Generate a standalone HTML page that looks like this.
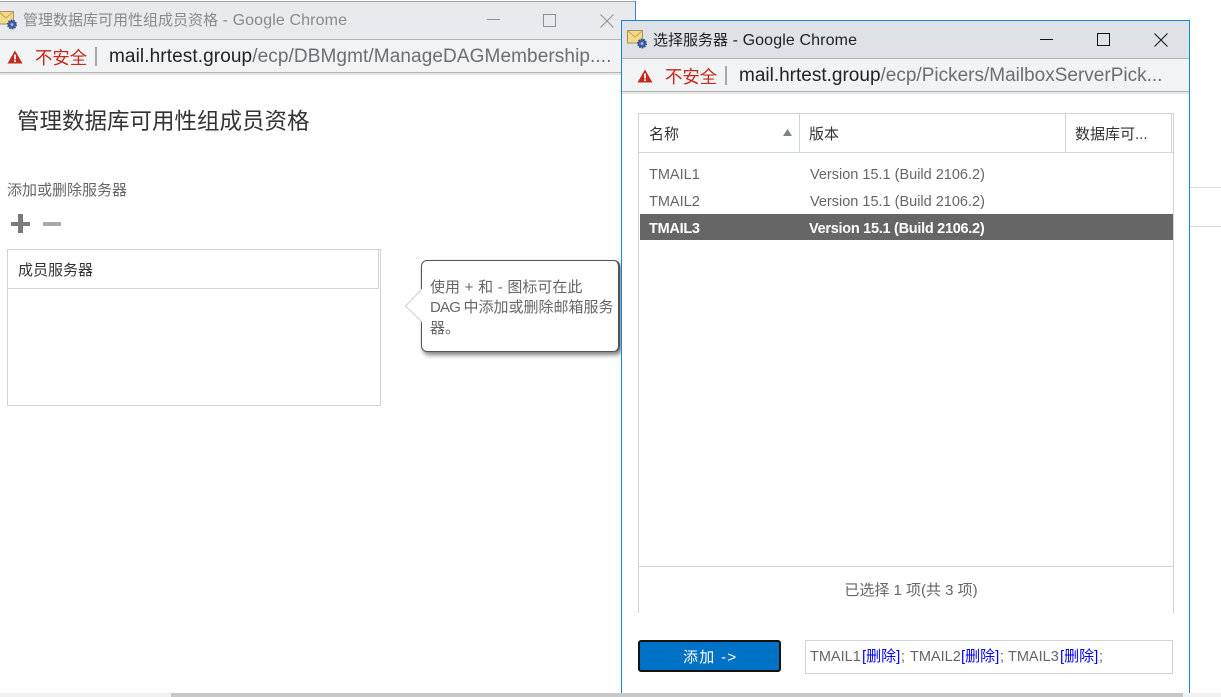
<!DOCTYPE html>
<html lang="zh-CN">
<head>
<meta charset="utf-8">
<title>管理数据库可用性组成员资格</title>
<style>
html,body{margin:0;padding:0;background:#fff;width:1221px;height:697px;overflow:hidden}
body{position:relative;font-family:"Liberation Sans","Noto Sans CJK SC",sans-serif}
.a{position:absolute}
.t{position:absolute;white-space:nowrap;line-height:20px}
svg{position:absolute;overflow:visible}
.l{color:#00f;font-size:15px}
</style>
</head>
<body>
<!-- background lines right -->
<div class="a" style="left:1190px;top:187px;width:31px;height:1px;background:#d8dde0"></div>
<div class="a" style="left:1190px;top:226px;width:31px;height:1px;background:#d8dde0"></div>

<!-- LEFT WINDOW -->
<div class="a" style="left:0;top:1px;width:635px;height:1px;background:#a6a6a6"></div>
<div class="a" style="left:635px;top:1px;width:1px;height:19px;background:#3a86c8"></div>
<div class="a" style="left:0;top:2px;width:635px;height:37px;background:#e8eaed"></div>
<div class="a" style="left:0;top:39px;width:621px;height:1px;background:#b4b4b4"></div>
<div class="a" style="left:0;top:40px;width:621px;height:32px;background:#f1f3f4"></div>
<div class="a" style="left:0;top:72px;width:621px;height:1px;background:#b4b4b4"></div>
<div class="a" style="left:0;top:73px;width:621px;height:2px;background:#e6e6e6"></div>

<svg style="left:-2px;top:10px" width="20" height="20" viewBox="0 0 20 20">
  <rect x="0.5" y="1.5" width="15" height="12.5" fill="#f4d98a" stroke="#a89060" stroke-width="1"/>
  <path d="M0.5 1.5L8 8L15.5 1.5" fill="none" stroke="#c9a555" stroke-width="1"/>
  <circle cx="14" cy="14.5" r="4" fill="#3f5fa8" stroke="#2f4a8a" stroke-width="2" stroke-dasharray="1.5 1"/>
  <circle cx="14" cy="14.5" r="1.4" fill="#a6bce0"/>
</svg>
<div class="t" style="left:23px;top:11px;font-size:15px;color:#8a8a8a">管理数据库可用性组成员资格<span style="font-size:16px;letter-spacing:.12px"> - Google Chrome</span></div>

<div class="a" style="left:487px;top:19px;width:13px;height:1px;background:#8f8f8f"></div>
<div class="a" style="left:543px;top:14px;width:11px;height:11px;border:1px solid #8f8f8f"></div>
<svg style="left:600px;top:14px" width="14" height="14" viewBox="0 0 14 14"><path d="M0.5 0.5L13.5 13.5M13.5 0.5L0.5 13.5" stroke="#8f8f8f" stroke-width="1" fill="none"/></svg>

<svg style="left:7px;top:50px" width="16" height="14" viewBox="0 0 16 14"><path d="M8 0.5L15.5 13.5H0.5Z" fill="#c5281c"/><rect x="7.1" y="4.5" width="1.8" height="5" fill="#fff"/><rect x="7.1" y="10.3" width="1.8" height="1.8" fill="#fff"/></svg>
<div class="t" style="left:35px;top:48px;font-size:17.4px;color:#c5281c">不安全</div>
<div class="a" style="left:95px;top:47px;width:2px;height:19px;background:#a8a8a8"></div>
<div class="t" style="left:109px;top:47px;font-size:19px;color:#222;letter-spacing:.1px">mail.hrtest.group<span style="color:#6a6f74">/ecp/DBMgmt/ManageDAGMembership....</span></div>

<div class="t" style="left:17px;top:108px;font-size:22.5px;line-height:28px;color:#333">管理数据库可用性组成员资格</div>
<div class="t" style="left:7px;top:181px;font-size:15px;color:#666">添加或删除服务器</div>

<div class="a" style="left:11px;top:222px;width:19px;height:4px;background:#7a7a7a"></div>
<div class="a" style="left:18px;top:214px;width:5px;height:19px;background:#7a7a7a"></div>
<div class="a" style="left:43px;top:222px;width:18px;height:4px;background:#a6a8aa"></div>

<div class="a" style="left:7px;top:249px;width:372px;height:155px;border:1px solid #d0d4d6"></div>
<div class="a" style="left:8px;top:288px;width:371px;height:1px;background:#ced4d8"></div>
<div class="a" style="left:378px;top:250px;width:1px;height:39px;background:#ced4d8"></div>
<div class="t" style="left:18px;top:261px;font-size:15px;color:#333">成员服务器</div>

<!-- callout -->
<div class="a" style="left:421px;top:260px;width:196px;height:90px;background:#fff;border:1px solid #555;border-right:2px solid #555;border-radius:6px;box-shadow:2px 3px 5px rgba(0,0,0,.5)"></div>
<svg style="left:404px;top:289px" width="19" height="34" viewBox="0 0 19 34"><path d="M18 0L1.5 17L18 33" fill="#fff" stroke="#cfcfcf" stroke-width="1"/><rect x="18" y="0" width="1.5" height="33" fill="#fff"/></svg>
<div class="t" style="left:430px;top:278px;font-size:15px;color:#666;word-spacing:.5px">使用 + 和 - 图标可在此</div>
<div class="t" style="left:430px;top:298px;font-size:15px;color:#666"><span style="letter-spacing:-.8px">DAG </span>中添加或删除邮箱服务</div>
<div class="t" style="left:430px;top:319px;font-size:15px;color:#666">器。</div>

<!-- RIGHT WINDOW -->
<div class="a" style="left:621px;top:20px;width:567px;height:673px;background:#fff;border:1px solid #1d83d4;border-bottom:0"></div>
<div class="a" style="left:622px;top:21px;width:567px;height:37px;background:#dee1e6"></div>
<div class="a" style="left:622px;top:58px;width:567px;height:1px;background:#b4b4b4"></div>
<div class="a" style="left:622px;top:59px;width:567px;height:32px;background:#f1f3f4"></div>
<div class="a" style="left:622px;top:91px;width:567px;height:1px;background:#b4b4b4"></div>
<div class="a" style="left:622px;top:92px;width:567px;height:2px;background:#e6e6e6"></div>

<svg style="left:627px;top:29px" width="20" height="20" viewBox="0 0 20 20">
  <rect x="0.5" y="1.5" width="15" height="12.5" fill="#f4d98a" stroke="#a89060" stroke-width="1"/>
  <path d="M0.5 1.5L8 8L15.5 1.5" fill="none" stroke="#c9a555" stroke-width="1"/>
  <circle cx="15" cy="14.5" r="4" fill="#3f5fa8" stroke="#2f4a8a" stroke-width="2" stroke-dasharray="1.5 1"/>
  <circle cx="15" cy="14.5" r="1.4" fill="#a6bce0"/>
</svg>
<div class="t" style="left:653px;top:31px;font-size:15px;color:#222">选择服务器<span style="font-size:16px;letter-spacing:.12px"> - Google Chrome</span></div>

<div class="a" style="left:1040px;top:39px;width:13px;height:1px;background:#111"></div>
<div class="a" style="left:1097px;top:33px;width:11px;height:11px;border:1px solid #111"></div>
<svg style="left:1154px;top:33px" width="14" height="14" viewBox="0 0 14 14"><path d="M0.5 0.5L13.5 13.5M13.5 0.5L0.5 13.5" stroke="#111" stroke-width="1" fill="none"/></svg>

<svg style="left:637px;top:69px" width="16" height="14" viewBox="0 0 16 14"><path d="M8 0.5L15.5 13.5H0.5Z" fill="#c5281c"/><rect x="7.1" y="4.5" width="1.8" height="5" fill="#fff"/><rect x="7.1" y="10.3" width="1.8" height="1.8" fill="#fff"/></svg>
<div class="t" style="left:665px;top:67px;font-size:17.4px;color:#c5281c">不安全</div>
<div class="a" style="left:725px;top:66px;width:2px;height:19px;background:#a8a8a8"></div>
<div class="t" style="left:739px;top:66px;font-size:19px;color:#222">mail.hrtest.group<span style="color:#6a6f74">/ecp/Pickers/MailboxServerPick...</span></div>

<!-- grid -->
<div class="a" style="left:638px;top:113px;width:535px;height:1px;background:#d0d4d6"></div>
<div class="a" style="left:638px;top:113px;width:1px;height:500px;background:#d0d4d6"></div>
<div class="a" style="left:1173px;top:113px;width:1px;height:500px;background:#d0d4d6"></div>
<div class="a" style="left:639px;top:152px;width:534px;height:1px;background:#ced4d8"></div>
<div class="a" style="left:799px;top:114px;width:1px;height:38px;background:#ced4d8"></div>
<div class="a" style="left:1065px;top:114px;width:1px;height:38px;background:#ced4d8"></div>
<div class="a" style="left:1171px;top:114px;width:1px;height:38px;background:#ced4d8"></div>
<div class="t" style="left:649px;top:125px;font-size:15px;color:#333">名称</div>
<svg style="left:783px;top:129px" width="9" height="7" viewBox="0 0 9 7"><path d="M4.5 0L9 7H0Z" fill="#7d8482"/></svg>
<div class="t" style="left:809px;top:125px;font-size:15px;color:#333">版本</div>
<div class="t" style="left:1075px;top:125px;font-size:15px;color:#333">数据库可...</div>

<div class="t" style="left:649px;top:165px;font-size:14.5px;color:#666">TMAIL1</div>
<div class="t" style="left:810px;top:165px;font-size:14.5px;color:#666">Version 15.1 (Build 2106.2)</div>
<div class="t" style="left:649px;top:192px;font-size:14.5px;color:#666">TMAIL2</div>
<div class="t" style="left:810px;top:192px;font-size:14.5px;color:#666">Version 15.1 (Build 2106.2)</div>
<div class="a" style="left:640px;top:214px;width:533px;height:26px;background:#666"></div>
<div class="t" style="left:649px;top:219px;font-size:14.5px;color:#fff;font-weight:bold;letter-spacing:-.28px">TMAIL3</div>
<div class="t" style="left:809px;top:219px;font-size:14.5px;color:#fff;font-weight:bold;letter-spacing:-.28px">Version 15.1 (Build 2106.2)</div>

<div class="a" style="left:639px;top:566px;width:534px;height:1px;background:#ced4d8"></div>
<div class="t" style="left:644px;top:581px;width:534px;text-align:center;font-size:15px;color:#666">已选择 1 项(共 3 项)</div>

<!-- button -->
<div class="a" style="left:638px;top:640px;width:139px;height:28px;background:#0072c6;border:2px solid #111;border-radius:3px"></div>
<div class="t" style="left:683px;top:648px;font-size:15px;color:#fff;letter-spacing:1.3px">添加 -&gt;</div>

<!-- picked -->
<div class="a" style="left:805px;top:640px;width:366px;height:32px;border:1px solid #d0d4d6"></div>
<div class="t" style="left:810px;top:647px;font-size:14.5px;color:#666">TMAIL1</div>
<div class="t l" style="left:862px;top:647px">[删除]</div>
<div class="t" style="left:901px;top:647px;font-size:14.5px;color:#666">;</div>
<div class="t" style="left:910px;top:647px;font-size:14.5px;color:#666">TMAIL2</div>
<div class="t l" style="left:961px;top:647px">[删除]</div>
<div class="t" style="left:1000px;top:647px;font-size:14.5px;color:#666">;</div>
<div class="t" style="left:1008px;top:647px;font-size:14.5px;color:#666">TMAIL3</div>
<div class="t l" style="left:1060px;top:647px">[删除]</div>
<div class="t" style="left:1099px;top:647px;font-size:14.5px;color:#666">;</div>

<!-- bottom scrollbar -->
<div class="a" style="left:0;top:693px;width:1221px;height:4px;background:#f1f1f1"></div>
<div class="a" style="left:171px;top:693px;width:1012px;height:4px;background:#c8c8c8"></div>
</body>
</html>
